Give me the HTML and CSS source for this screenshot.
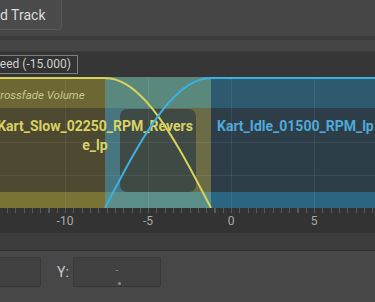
FILE: index.html
```html
<!DOCTYPE html>
<html>
<head>
<meta charset="utf-8">
<link rel="stylesheet" href="styles.css">
</head>
<body>
<div class="app">
  <div class="toolbar"><button class="btn">Add Track</button></div>
  <div class="sep"></div>
  <div class="subbar"></div>
  <div class="curve-header"><span class="value-tag">Speed (-15.000)</span></div>
  <div class="tracks">
    <div class="clip clip-yellow" style="left:-21px;width:232px">
      <div class="clip-head"><span class="xf-label">Crossfade Volume</span></div>
      <div class="clip-body"><div class="clip-title">Kart_Slow_02250_RPM_Revers<br>e_lp</div></div>
      <div class="clip-foot"></div>
    </div>
    <div class="clip clip-blue" style="left:211px;width:170px">
      <div class="clip-head"></div>
      <div class="clip-body"><div class="clip-title">Kart_Idle_01500_RPM_lp</div></div>
      <div class="clip-foot"></div>
    </div>
    <div class="clip overlap" style="left:105px;width:106px">
      <div class="clip-head"></div>
      <div class="clip-body"><div class="xf-inner"></div></div>
      <div class="clip-foot"></div>
    </div>
    <svg class="curves" width="375" height="131" viewBox="0 0 375 131">
      <g class="grid">
        <line x1="65.5" y1="0" x2="65.5" y2="131"/>
        <line x1="148.5" y1="0" x2="148.5" y2="131"/>
        <line x1="231.5" y1="0" x2="231.5" y2="131"/>
        <line x1="314.5" y1="0" x2="314.5" y2="131"/>
        <line x1="0" y1="65.5" x2="375" y2="65.5"/>
        <line x1="0" y1="98.5" x2="375" y2="98.5"/>
      </g>
      <polyline class="c-yellow" points="-5,1 105,1 110.3,1.4 115.6,2.6 120.9,4.6 126.2,7.4 131.5,10.9 136.8,15.2 142.1,20.2 147.4,25.8 152.7,32.1 158,39.1 163.3,46.6 168.6,54.6 173.9,63.1 179.2,72 184.5,81.3 189.8,90.8 195.1,100.7 200.4,110.7 205.7,120.8 211,131"/>
      <polyline class="c-blue" points="105,131 110.3,120.8 115.6,110.7 120.9,100.7 126.2,90.8 131.5,81.3 136.8,72 142.1,63.1 147.4,54.6 152.7,46.6 158,39.1 163.3,32.1 168.6,25.8 173.9,20.2 179.2,15.2 184.5,10.9 189.8,7.4 195.1,4.6 200.4,2.6 205.7,1.4 211,1 380,1"/>
    </svg>
  </div>
  <div class="ruler">
    <span class="tick-label" style="left:65px">-10</span>
    <span class="tick-label" style="left:148px">-5</span>
    <span class="tick-label" style="left:231px">0</span>
    <span class="tick-label" style="left:314px">5</span>
  </div>
  <div class="band"></div>
  <div class="props">
    <div class="field field-x"></div>
    <span class="axis">Y:</span>
    <div class="field field-y"><span class="field-val">-</span><span class="field-dot"></span></div>
  </div>
</div>
</body>
</html>
```

FILE: styles.css
```css
html, body {
  margin: 0;
  padding: 0;
}
body {
  background: #474747;
  font-family: Roboto, "Noto Sans", "DejaVu Sans", sans-serif;
  width: 375px;
  height: 302px;
  overflow: hidden;
}
.app {
  display: flex;
  flex-direction: column;
  width: 375px;
  height: 302px;
  overflow: hidden;
}
.toolbar {
  height: 36px;
  background: #464646;
  display: flex;
  align-items: flex-start;
  flex: none;
}
.btn {
  margin-left: -30px;
  margin-top: -3px;
  height: 33px;
  padding: 3px 16px 0 12px;
  background: #4b4b4b;
  border: 1px solid #585858;
  border-radius: 3px;
  color: #dcdcdc;
  font-family: Roboto, "Noto Sans", sans-serif;
  font-size: 14px;
}
.sep {
  height: 4px;
  background: #3b3b3b;
  flex: none;
}
.subbar {
  height: 11px;
  background: #454545;
  border-bottom: 1px solid #3c3c3c;
  flex: none;
}
.curve-header {
  height: 25px;
  box-sizing: border-box;
  background: #363636;
  padding-top: 3px;
  display: flex;
  align-items: flex-start;
  flex: none;
}
.value-tag {
  margin-left: -19px;
  height: 17px;
  line-height: 17px;
  border: 1px solid #7e7e7e;
  background: #333333;
  color: #cfcfcf;
  font-size: 12px;
  padding: 0 6px 0 4px;
}
.tracks {
  position: relative;
  height: 131px;
  overflow: hidden;
  background: #333;
  flex: none;
}
.clip {
  position: absolute;
  top: 0;
  bottom: 0;
  display: flex;
  flex-direction: column;
}
.clip-head {
  height: 31px;
  flex: none;
}
.clip-body {
  flex: 1;
  display: flex;
  flex-direction: column;
}
.clip-foot {
  height: 16px;
  flex: none;
}
.clip-yellow .clip-head { background: #6c6733; }
.clip-yellow .clip-body { background: #4c4930; }
.clip-yellow .clip-foot { background: #7a7335; }
.clip-blue .clip-head { background: #2d5a6e; }
.clip-blue .clip-body { background: #2e3e48; }
.clip-blue .clip-foot { background: #2c6581; }
.overlap {
  z-index: 1;
  box-shadow: inset 1px 0 0 rgba(130, 205, 235, 0.65);
}
.overlap .clip-head { background: #5a887c; }
.overlap .clip-body {
  background: linear-gradient(to right, #487680 0 50%, #6b6c45 50% 100%);
  padding: 1px 15px 0 15px;
}
.overlap .clip-foot { background: #5b8e86; }
.xf-inner {
  flex: 1;
  background: #3e4a43;
  border-radius: 7px;
}
.xf-label {
  display: block;
  padding: 11px 0 0 14px;
  font-style: italic;
  font-size: 11.5px;
  color: #cdc68c;
}
.clip-title {
  position: relative;
  z-index: 2;
  padding-top: 9px;
  line-height: 19px;
  font-size: 14px;
  font-weight: bold;
}
.clip-yellow .clip-title {
  text-align: center;
  color: #d9d264;
}
.clip-blue .clip-title {
  padding-left: 6px;
  color: #4fa9d8;
}
.curves {
  position: absolute;
  left: 0;
  top: 0;
  z-index: 3;
}
.grid line {
  stroke: rgba(255, 255, 255, 0.07);
  stroke-width: 1;
}
.c-yellow, .c-blue {
  fill: none;
  stroke-width: 2;
  stroke-linejoin: round;
}
.c-yellow { stroke: #d7d35c; }
.c-blue { stroke: #3cb0e2; }
.ruler {
  position: relative;
  height: 25px;
  flex: none;
  background-color: #333333;
  background-image: repeating-linear-gradient(to right, #595959 0 1px, transparent 1px 8.3px);
  background-position: 6.9px 0;
  background-size: 100% 5px;
  background-repeat: no-repeat;
}
.tick-label {
  position: absolute;
  top: 6px;
  transform: translateX(-50%);
  font-size: 12px;
  color: #a9a9a9;
}
.band {
  height: 17px;
  background: #3d3d3d;
  border-bottom: 1px solid #303030;
  flex: none;
}
.props {
  flex: 1;
  background: #474747;
  display: flex;
  align-items: center;
  padding-bottom: 10px;
}
.field {
  height: 30px;
  box-sizing: border-box;
  background: #414141;
  border: 1px solid #3a3a3a;
  border-bottom-color: #363636;
  border-radius: 2px;
}
.field-x {
  margin-left: -10px;
  width: 51px;
}
.axis {
  margin-left: 16px;
  width: 16px;
  font-size: 14px;
  color: #c8c8c8;
}
.field-y {
  width: 88px;
  position: relative;
  display: flex;
  justify-content: center;
}
.field-val {
  font-size: 10px;
  line-height: 26px;
  color: #8a8a8a;
}
.field-dot {
  position: absolute;
  left: 44px;
  bottom: 1px;
  width: 3px;
  height: 3px;
  border-radius: 50%;
  background: #8e8e8e;
}
```
